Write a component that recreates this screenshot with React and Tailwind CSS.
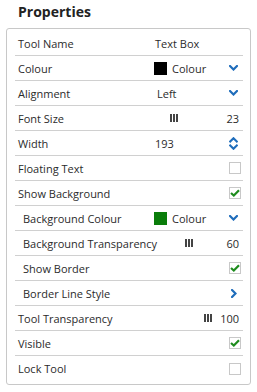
import React from "react";

const Chevron = () => (
  <svg width="9" height="6" viewBox="0 0 9 6" className="block">
    <path d="M1 1 L4.5 4.5 L8 1" fill="none" stroke="#1f6dbb" strokeWidth="2.2" strokeLinecap="square" />
  </svg>
);

const ChevronRight = () => (
  <svg width="6" height="9" viewBox="0 0 6 9" className="block">
    <path d="M1 1 L4.5 4.5 L1 8" fill="none" stroke="#1f6dbb" strokeWidth="2.2" strokeLinecap="square" />
  </svg>
);

const UpDown = () => (
  <svg width="9" height="13" viewBox="0 0 9 13" className="block">
    <path d="M1.2 4.5 L4.5 1.3 L7.8 4.5" fill="none" stroke="#1f6dbb" strokeWidth="2.2" strokeLinecap="square" />
    <path d="M1.2 8.5 L4.5 11.7 L7.8 8.5" fill="none" stroke="#1f6dbb" strokeWidth="2.2" strokeLinecap="square" />
  </svg>
);

const Thumb = () => (
  <div className="flex gap-[1px] h-[8px]">
    <div className="w-[2px] bg-[#444]" />
    <div className="w-[2px] bg-[#444]" />
    <div className="w-[2px] bg-[#444]" />
  </div>
);

const Checkbox = ({ checked }) => (
  <div className="w-[12px] h-[12px] border border-[#c8c8c8] bg-white flex items-center justify-center">
    {checked && (
      <svg width="10" height="8" viewBox="0 0 10 8" className="block">
        <path d="M1 4 L3.8 6.5 L9 1.2" fill="none" stroke="#1e8c1e" strokeWidth="2.2" />
      </svg>
    )}
  </div>
);

const Row = ({ label, indent, last, children }) => (
  <div
    className={`flex items-center h-[25px] ${last ? "" : "border-b border-[#d0d0d0]"} ${
      indent ? "pl-[8px]" : "pl-[3px]"
    }`}
  >
    <div className={`${indent ? "w-[131px]" : "w-[136px]"} shrink-0 whitespace-nowrap`}>{label}</div>
    <div className="flex-1 flex items-center min-w-0">{children}</div>
  </div>
);

export default function App() {
  return (
    <div
      className="w-[257px] h-[392px] bg-white text-[#2b2b2b] text-[11px] leading-[15px]"
      style={{ fontFamily: '"Open Sans", sans-serif' }}
    >
      <div className="pl-[18px] pt-[2px] text-[14px] leading-[19px] font-bold text-[#222]">Properties</div>
      <div className="ml-[6px] mt-[7px] w-[245px] border border-[#c8c8c8] rounded-[3px] pl-[8px] pr-[7px] pt-[2px] pb-[3px]">
        <Row label="Tool Name">
          <span className="ml-[1px]">Text Box</span>
        </Row>
        <Row label="Colour">
          <div className="w-[13px] h-[13px] bg-black" />
          <span className="ml-[5px]">Colour</span>
          <div className="ml-auto mr-[5px]"><Chevron /></div>
        </Row>
        <Row label="Alignment">
          <span className="ml-[3px]">Left</span>
          <div className="ml-auto mr-[5px]"><Chevron /></div>
        </Row>
        <Row label="Font Size">
          <div className="ml-[16px]"><Thumb /></div>
          <span className="ml-auto mr-[4px]">23</span>
        </Row>
        <Row label="Width">
          <span className="ml-[1px]">193</span>
          <div className="ml-auto mr-[5px]"><UpDown /></div>
        </Row>
        <Row label="Floating Text">
          <div className="ml-auto mr-[2px]"><Checkbox /></div>
        </Row>
        <Row label="Show Background">
          <div className="ml-auto mr-[2px]"><Checkbox checked /></div>
        </Row>
        <Row label="Background Colour" indent>
          <div className="w-[13px] h-[13px] bg-[#0a7d0a]" />
          <span className="ml-[5px]">Colour</span>
          <div className="ml-auto mr-[5px]"><Chevron /></div>
        </Row>
        <Row label="Background Transparency" indent>
          <div className="ml-[31px]"><Thumb /></div>
          <span className="ml-auto mr-[4px]">60</span>
        </Row>
        <Row label="Show Border" indent>
          <div className="ml-auto mr-[2px]"><Checkbox checked /></div>
        </Row>
        <Row label="Border Line Style" indent>
          <div className="ml-auto mr-[6px]"><ChevronRight /></div>
        </Row>
        <Row label="Tool Transparency">
          <div className="ml-[50px]"><Thumb /></div>
          <span className="ml-auto mr-[4px]">100</span>
        </Row>
        <Row label="Visible">
          <div className="ml-auto mr-[2px]"><Checkbox checked /></div>
        </Row>
        <Row label="Lock Tool" last>
          <div className="ml-auto mr-[2px]"><Checkbox /></div>
        </Row>
      </div>
    </div>
  );
}
